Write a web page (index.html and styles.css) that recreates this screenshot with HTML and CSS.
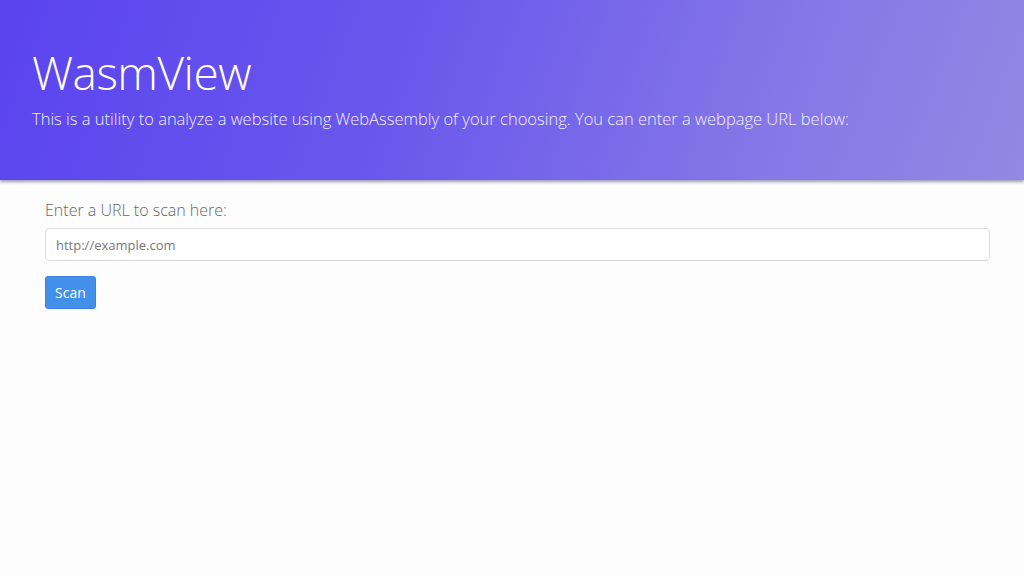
FILE: index.html
```html
<!DOCTYPE html>
<html lang="en">
<head>
<meta charset="utf-8">
<title>WasmView</title>
<link rel="stylesheet" href="styles.css">
</head>
<body>
<header class="hero">
  <h1 class="hero-title">WasmView</h1>
  <p class="hero-lead">This is a utility to analyze a website using WebAssembly of your choosing. You can enter a webpage URL below:</p>
</header>
<main class="content">
  <label class="url-label" for="url">Enter a URL to scan here:</label>
  <input class="url-input" id="url" type="text" placeholder="http://example.com">
  <button class="scan-btn" type="button">Scan</button>
</main>
</body>
</html>
```

FILE: styles.css
```css
html, body {
  margin: 0;
  padding: 0;
}
body {
  background: #fdfdfd;
  font-family: "Open Sans", "Noto Sans", sans-serif;
  color: #555;
}
.hero {
  height: 180px;
  box-sizing: border-box;
  padding: 42px 32px 0;
  background: linear-gradient(110deg, #5a43ef 0%, #6a58ec 40%, #8577e7 75%, #9388e2 100%);
  box-shadow: 0 2px 3px rgba(40, 30, 90, 0.45);
  color: #fff;
}
.hero-title {
  margin: 0;
  font-weight: 300;
  font-size: 46px;
  line-height: 60px;
  letter-spacing: -0.5px;
}
.hero-lead {
  margin: 5px 0 0;
  font-weight: 300;
  font-size: 16.5px;
  line-height: 24px;
  color: #f1efff;
}
.content {
  display: flex;
  flex-direction: column;
  align-items: flex-start;
  padding: 18px 34px 0 45px;
}
.url-label {
  font-weight: 300;
  font-size: 16px;
  line-height: 24px;
  color: #666;
  margin-bottom: 6px;
}
.url-input {
  align-self: stretch;
  box-sizing: border-box;
  height: 33px;
  padding: 0 10px;
  border: 1px solid #dcdcdc;
  border-radius: 4px;
  background: #fff;
  font-family: "Open Sans", sans-serif;
  font-size: 13px;
  color: #555;
}
.url-input::placeholder {
  color: #777;
}
.scan-btn {
  margin-top: 15px;
  height: 33px;
  padding: 0 9px;
  border: 1px solid #3a84dd;
  border-radius: 3px;
  background: #4290ea;
  color: #fff;
  font-family: "Open Sans", sans-serif;
  font-size: 14px;
}
```
